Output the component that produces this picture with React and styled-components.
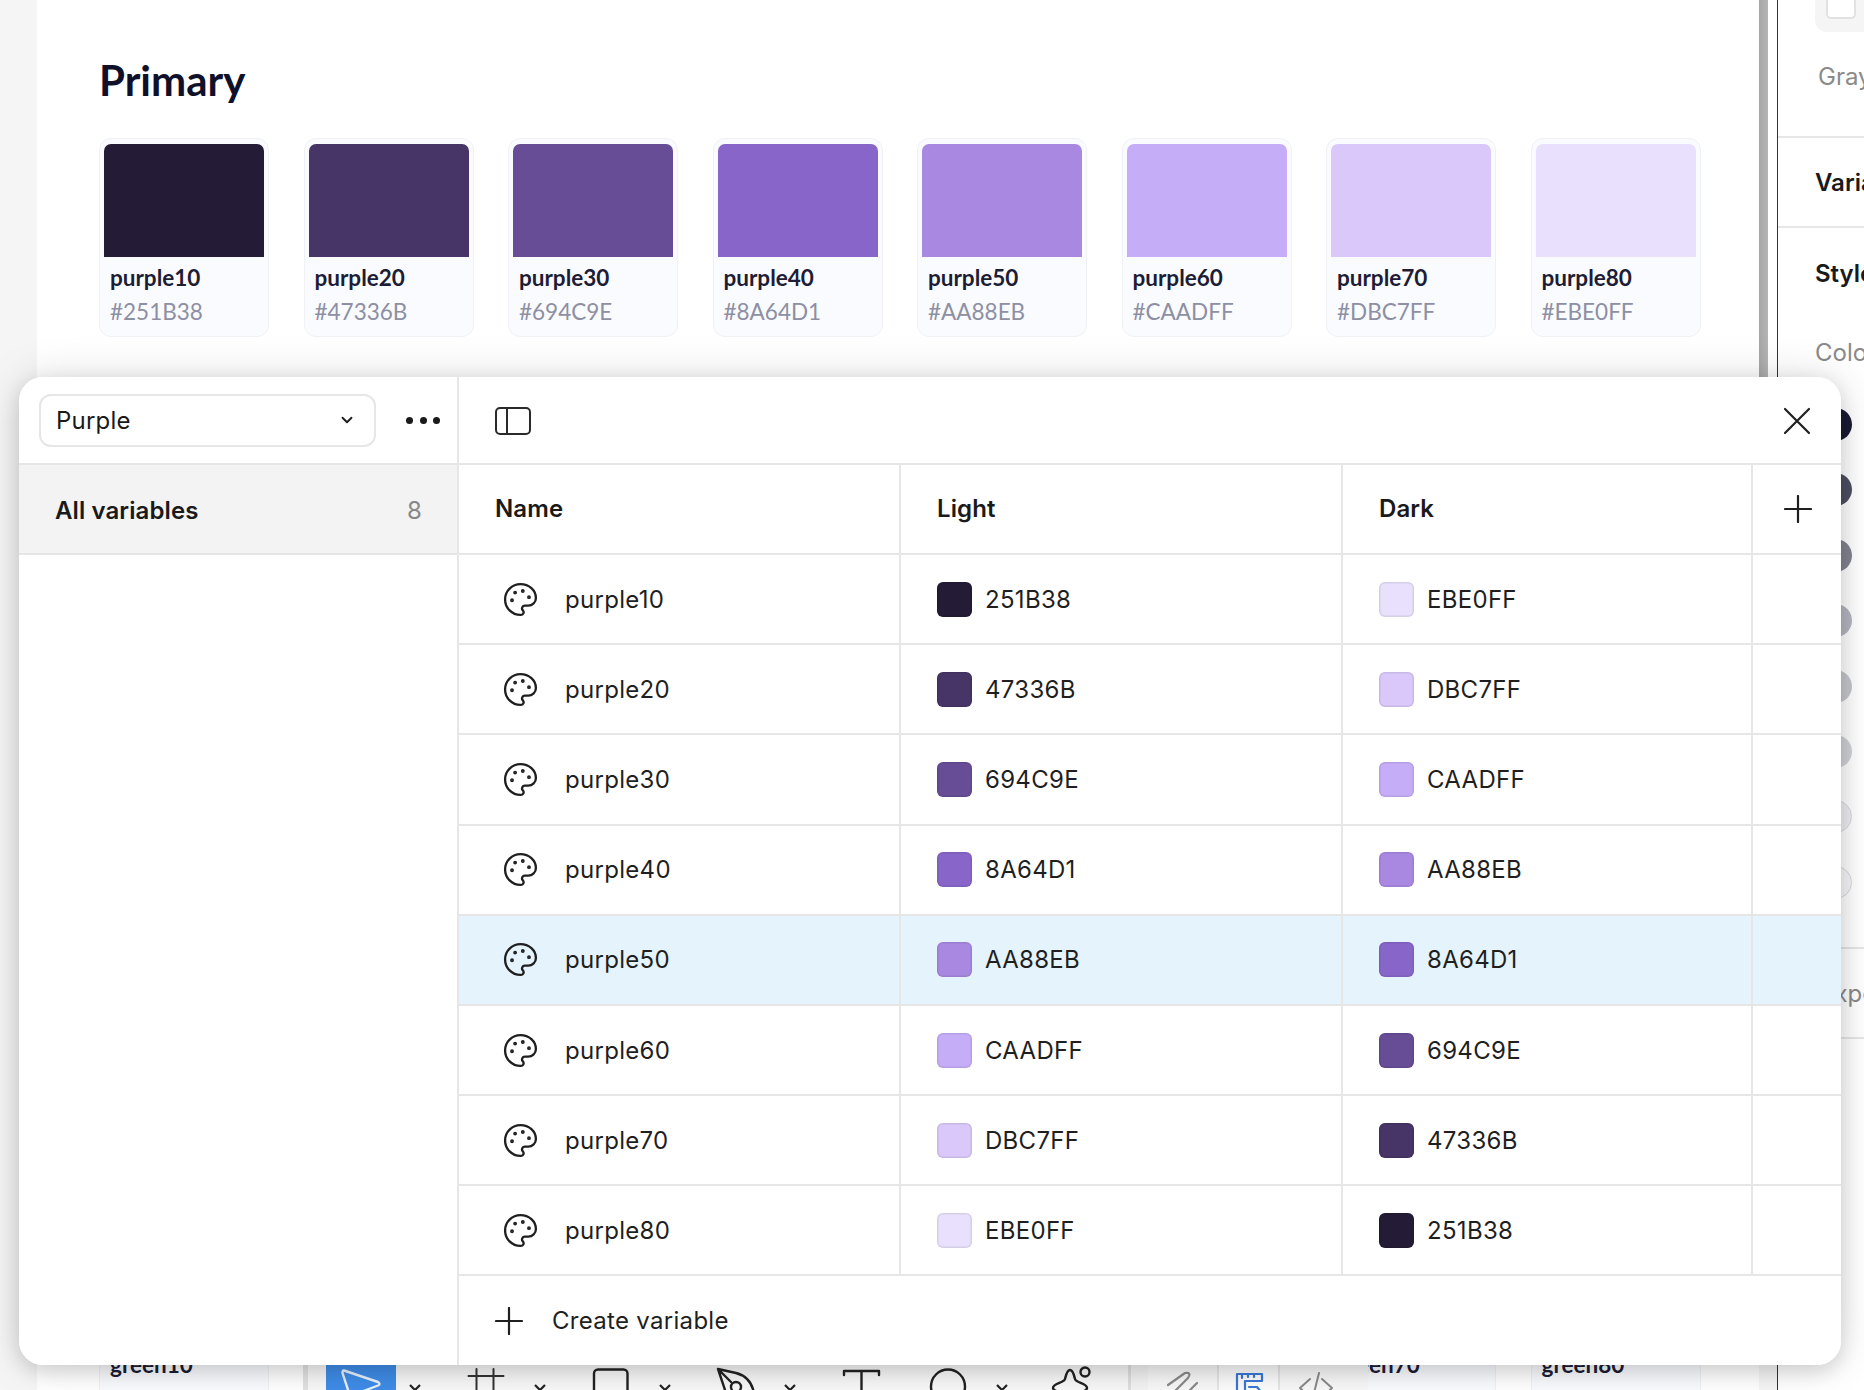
import React from 'react';
import styled, { createGlobalStyle } from 'styled-components';
import { Palette, ChevronDown } from 'lucide-react';

const GlobalStyle = createGlobalStyle`
  html, body {
    margin: 0;
    padding: 0;
    background: #fff;
  }
  * {
    box-sizing: border-box;
  }
`;

const purples = [
  { name: 'purple10', hex: '251B38', shown: '#241b36' },
  { name: 'purple20', hex: '47336B', shown: '#463566' },
  { name: 'purple30', hex: '694C9E', shown: '#664d96' },
  { name: 'purple40', hex: '8A64D1', shown: '#8866c9' },
  { name: 'purple50', hex: 'AA88EB', shown: '#a988e2' },
  { name: 'purple60', hex: 'CAADFF', shown: '#c5adf7' },
  { name: 'purple70', hex: 'DBC7FF', shown: '#d9c8f9' },
  { name: 'purple80', hex: 'EBE0FF', shown: '#e8e0fc' },
];

const greens = ['green10', 'green20', 'green30', 'green40', 'green50', 'green60', 'green70', 'green80'];

const styleDots = [
  { color: '#1a1b33' },
  { color: '#4d4e62' },
  { color: '#82838f' },
  { color: '#b4b5bf' },
  { color: '#c6c7cd' },
  { color: '#d0d1d6' },
  { color: '#eeeef2', outlined: true },
  { color: '#f7f7fa', outlined: true },
];

const Page = styled.div`
  position: relative;
  display: flex;
  width: 1864px;
  height: 1390px;
  overflow: hidden;
  font-family: Inter, sans-serif;
  background: #f5f5f5;
`;

const Gutter = styled.div`
  width: 37px;
  flex: none;
`;

const Canvas = styled.main`
  width: 1722px;
  flex: none;
  background: #fff;
  padding: 0 0 0 62px;
`;

const Heading = styled.h2`
  margin: 0;
  padding-top: 56px;
  height: 138px;
  font-family: Lato, sans-serif;
  font-size: 42px;
  line-height: 48px;
  font-weight: 700;
  color: #10102b;
`;

const CardRow = styled.div`
  display: flex;
  gap: 34.5px;
  margin-top: ${(p) => p.$top || 0}px;
`;

const Card = styled.div`
  width: 170px;
  height: 199px;
  flex: none;
  padding: 5px 4px 0;
  background: #fafbff;
  border: 1px solid #f0f1f5;
  border-radius: 12px;
`;

const Chip = styled.div`
  height: 113px;
  background: ${(p) => p.$color};
  border-radius: 7px 7px 0 0;
`;

const CardName = styled.div`
  margin: 7px 0 0 6px;
  font-family: Lato, sans-serif;
  font-size: 22.5px;
  line-height: 28px;
  font-weight: 700;
  color: #1d1d35;
`;

const CardHex = styled.div`
  margin: 6px 0 0 6px;
  font-family: Lato, sans-serif;
  font-size: 22.5px;
  line-height: 28px;
  color: #8d8fa3;
`;

const Scrollbar = styled.div`
  width: 9px;
  flex: none;
  height: 1340px;
  background: linear-gradient(90deg, #a6a6a6, #b4b4b4);
`;

const Spacer = styled.div`
  width: 9px;
  flex: none;
  height: 1340px;
  background: #fff;
`;

const Panel = styled.aside`
  flex: 1;
  border-left: 1.5px solid #333;
  background: #fff;
`;

const PanelTop = styled.div`
  height: 138px;
  padding: 0 0 0 37px;
  border-bottom: 2px solid #e6e6e6;
`;

const SwatchTray = styled.div`
  height: 32px;
  padding-left: 11px;
  background: #f5f5f5;
  border-radius: 0 0 0 12px;
`;

const SwatchBox = styled.div`
  width: 30px;
  height: 19px;
  background: #fff;
  border: 2px solid #e2e2e2;
  border-top: 0;
  border-radius: 0 0 5px 5px;
`;

const GrayLabel = styled.div`
  margin: ${(p) => p.$top}px 0 0 ${(p) => p.$left}px;
  font-size: 24px;
  line-height: 30px;
  color: #8a8a8a;
  white-space: nowrap;
`;

const PanelTitle = styled.div`
  height: 90px;
  padding-left: 37px;
  display: flex;
  align-items: center;
  border-bottom: ${(p) => (p.$flat ? '0' : '2px solid #e6e6e6')};
  font-size: 24px;
  font-weight: 600;
  color: #1a1a1a;
  white-space: nowrap;
`;

const DotList = styled.div`
  display: flex;
  flex-direction: column;
  gap: 32.4px;
  padding: 0 0 0 41px;
  margin-top: 40px;
`;

const StyleDot = styled.div`
  width: 33px;
  height: 33px;
  border-radius: 50%;
  background: ${(p) => p.$color};
  border: ${(p) => (p.$outlined ? '1px solid #d8d8de' : '0')};
`;

const ColorBlock = styled.div`
  display: flow-root;
  height: 631px;
  border-bottom: 2px solid #e6e6e6;
`;

const ExportRow = styled.div`
  height: 90px;
  padding-left: 42px;
  display: flex;
  align-items: center;
  font-size: 24px;
  color: #8a8a8a;
  white-space: nowrap;
  border-bottom: 2px solid #e6e6e6;
`;

const Toolbar = styled.div`
  position: absolute;
  left: 303px;
  top: 1352px;
  width: 1065px;
  height: 60px;
  display: flex;
  border-left: 5px solid #e2e2e2;
  background: #f3f3f3;
`;

const ToolGroup = styled.div`
  display: flex;
  gap: 17px;
  width: 823px;
  padding-left: 18px;
  background: #f8f8f8;
  border-right: 3px solid #dfdfdf;
  flex: none;
`;

const ToolSlot = styled.div`
  display: flex;
  flex: none;
`;

const Tool = styled.div`
  width: 70px;
  height: 60px;
  flex: none;
  padding-top: 13px;
  background: ${(p) => (p.$active ? '#3f8de8' : 'transparent')};
`;

const Caret = styled.div`
  width: 38px;
  flex: none;
  display: flex;
  justify-content: center;
  padding-top: 32px;
`;

const ModeGroup = styled.div`
  display: flex;
  margin-left: 17px;
  flex: none;
  background: #f8f8f8;
`;

const ModeTool = styled.div`
  width: ${(p) => p.$w}px;
  height: 60px;
  flex: none;
  padding-top: 13px;
  background: ${(p) => (p.$active ? '#fcfcfc' : 'transparent')};
  border-left: ${(p) => (p.$active ? '2px solid #e6e6e6' : '0')};
  border-right: ${(p) => (p.$active ? '2px solid #e6e6e6' : '0')};
`;

const ModalShadow = styled.div`
  position: absolute;
  left: 19px;
  top: 377px;
  width: 1822px;
  height: 988px;
  border-radius: 24px;
  box-shadow: 0 0 44px rgba(0, 0, 0, 0.13), 0 6px 20px rgba(0, 0, 0, 0.14);
`;

const Modal = styled.section`
  position: absolute;
  left: 19px;
  top: 377px;
  width: 1822px;
  height: 988px;
  display: flex;
  background: #fff;
  border-radius: 24px;
  overflow: hidden;
`;

const Sidebar = styled.div`
  width: 440px;
  flex: none;
  border-right: 2px solid #e6e6e6;
`;

const SidebarTop = styled.div`
  height: 88px;
  display: flex;
  align-items: center;
  padding: 0 16px 0 20px;
  border-bottom: 2px solid #e6e6e6;
`;

const Select = styled.div`
  width: 337px;
  height: 53px;
  flex: none;
  display: flex;
  align-items: center;
  justify-content: space-between;
  padding: 0 18px 0 15px;
  border: 2px solid #e6e6e6;
  border-radius: 12px;
  font-size: 24px;
  letter-spacing: 0.2px;
  color: #1a1a1a;
`;

const Dots = styled.div`
  margin-left: 30px;
  display: flex;
  gap: 6.5px;
`;

const Dot = styled.i`
  width: 7px;
  height: 7px;
  border-radius: 50%;
  background: #1a1a1a;
`;

const Collection = styled.div`
  height: 90px;
  display: flex;
  align-items: center;
  justify-content: space-between;
  padding: 2px 35px 0 36px;
  background: #f3f3f3;
  border-bottom: 2px solid #e6e6e6;
  font-size: 24px;
  font-weight: 600;
  letter-spacing: 0.1px;
  color: #1a1a1a;
`;

const Count = styled.span`
  font-weight: 400;
  color: #888;
`;

const Content = styled.div`
  flex: 1;
  display: flex;
  flex-direction: column;
`;

const ContentTop = styled.div`
  height: 88px;
  display: flex;
  align-items: center;
  justify-content: space-between;
  padding: 2px 30px 0 36px;
  border-bottom: 2px solid #e6e6e6;
`;

const TableRow = styled.div`
  display: grid;
  grid-template-columns: 442px 442px 410px 88px;
  height: 90.17px;
  flex: none;
  background: ${(p) => (p.$selected ? '#e5f3fd' : '#fff')};
  border-bottom: 2px solid #e6e6e6;
`;

const Cell = styled.div`
  display: flex;
  align-items: center;
  padding-left: 36px;
  border-right: 2px solid #e6e6e6;
  font-size: 24px;
  letter-spacing: 0.3px;
  color: #1f1f1f;

  &:last-child {
    border-right: 0;
    padding-left: 31px;
  }
`;

const HeadCell = styled(Cell)`
  padding-bottom: ${(p) => (p.$icon ? 0 : 2)}px;
  font-weight: 600;
  letter-spacing: 0.1px;
  color: #1a1a1a;
`;

const PaletteIcon = styled(Palette)`
  width: 37px;
  height: 37px;
  margin: 0 26px 0 7px;
  flex: none;
`;

const ColorChip = styled.span`
  width: 35px;
  height: 35px;
  margin-right: 13px;
  flex: none;
  border-radius: 6px;
  background: ${(p) => p.$color};
  box-shadow: inset 0 0 0 1.5px rgba(0, 0, 0, 0.08);
`;

const Footer = styled.div`
  flex: 1;
  display: flex;
  align-items: center;
  gap: 29px;
  padding: 0 0 0 36px;
  font-size: 24px;
  letter-spacing: 0.3px;
  color: #1f1f1f;
`;

const PanelIcon = () => (
  <svg width="36" height="28" viewBox="0 0 36 28" fill="none" stroke="#2a2a2a" strokeWidth="2">
    <rect x="1" y="1" width="34" height="26" rx="4" />
    <path d="M12 1v26" />
  </svg>
);

const CloseIcon = () => (
  <svg width="28" height="28" viewBox="0 0 28 28" fill="none" stroke="#1f1f1f" strokeWidth="2.2" strokeLinecap="round">
    <path d="M2 2l24 24M26 2L2 26" />
  </svg>
);

const PlusIcon = () => (
  <svg width="28" height="28" viewBox="0 0 28 28" fill="none" stroke="#1f1f1f" strokeWidth="2.2" strokeLinecap="round">
    <path d="M14 1v26M1 14h26" />
  </svg>
);

const ToolIcon = ({ children, stroke = '#222', width = 70, strokeWidth = 2.4 }) => (
  <svg
    width={width}
    height="47"
    viewBox={`0 0 ${width} 47`}
    fill="none"
    stroke={stroke}
    strokeWidth={strokeWidth}
    strokeLinecap="round"
    strokeLinejoin="round"
  >
    {children}
  </svg>
);

const CaretIcon = () => (
  <svg width="12" height="8" viewBox="0 0 12 8" fill="none" stroke="#222" strokeWidth="2.2">
    <path d="M1 1l5 5 5-5" />
  </svg>
);

const VariableRow = ({ item, mirror, selected }) => (
  <TableRow $selected={selected}>
    <Cell>
      <PaletteIcon strokeWidth={1.5} color="#1f1f1f" />
      {item.name}
    </Cell>
    <Cell>
      <ColorChip $color={item.shown} />
      {item.hex}
    </Cell>
    <Cell>
      <ColorChip $color={mirror.shown} />
      {mirror.hex}
    </Cell>
    <Cell />
  </TableRow>
);

const App = () => (
  <>
    <GlobalStyle />
    <Page>
      <Gutter />
      <Canvas>
        <Heading>Primary</Heading>
        <CardRow>
          {purples.map((p) => (
            <Card key={p.name}>
              <Chip $color={p.shown} />
              <CardName>{p.name}</CardName>
              <CardHex>#{p.hex}</CardHex>
            </Card>
          ))}
        </CardRow>
        <CardRow $top={888}>
          {greens.map((g) => (
            <Card key={g}>
              <Chip $color="#dfe4e0" />
              <CardName>{g}</CardName>
            </Card>
          ))}
        </CardRow>
      </Canvas>
      <Scrollbar />
      <Spacer />
      <Panel>
        <PanelTop>
          <SwatchTray>
            <SwatchBox />
          </SwatchTray>
          <GrayLabel $top={30} $left={3}>Gray</GrayLabel>
        </PanelTop>
        <PanelTitle>Variables</PanelTitle>
        <PanelTitle $flat>Styles</PanelTitle>
        <ColorBlock>
          <GrayLabel $top={20} $left={37}>Color</GrayLabel>
          <DotList>
            {styleDots.map((d) => (
              <StyleDot key={d.color} $color={d.color} $outlined={d.outlined} />
            ))}
          </DotList>
        </ColorBlock>
        <ExportRow>Export</ExportRow>
      </Panel>
      <Toolbar>
        <ToolGroup>
          <ToolSlot>
            <Tool $active>
              <ToolIcon stroke="#e8f1fc">
                <path d="M18 5.5L52 17q3 2 0 3.5L35 27l-7 9q-3 1-3-2L16.5 8q0-3 1.5-2.5z" />
              </ToolIcon>
            </Tool>
            <Caret><CaretIcon /></Caret>
          </ToolSlot>
          <ToolSlot>
            <Tool>
              <ToolIcon stroke="#333" strokeWidth={2}>
                <path d="M17.5 11h35M25.5 4v40M42.5 4v40" />
              </ToolIcon>
            </Tool>
            <Caret><CaretIcon /></Caret>
          </ToolSlot>
          <ToolSlot>
            <Tool>
              <ToolIcon>
                <rect x="18" y="4.5" width="33.5" height="40" rx="4" />
              </ToolIcon>
            </Tool>
            <Caret><CaretIcon /></Caret>
          </ToolSlot>
          <ToolSlot>
            <Tool>
              <ToolIcon>
                <path d="M17 4l18 4q15 4 18 20v16M17 4l8 24v16M17 4l13 13" />
                <circle cx="35" cy="22" r="5" />
              </ToolIcon>
            </Tool>
            <Caret><CaretIcon /></Caret>
          </ToolSlot>
          <ToolSlot>
            <Tool>
              <ToolIcon>
                <path d="M18 10V6h35v4M35.5 6v40" />
              </ToolIcon>
            </Tool>
          </ToolSlot>
          <ToolSlot>
            <Tool>
              <ToolIcon>
                <circle cx="35" cy="21.5" r="17" />
              </ToolIcon>
            </Tool>
            <Caret><CaretIcon /></Caret>
          </ToolSlot>
          <ToolSlot>
            <Tool>
              <ToolIcon>
                <path d="M32 5c-3 0-4 5-5 9s-12 4-12 9c0 3 6 4 10 5M32 5c3 0 4 5 5 9s12 4 12 9c0 3-5 4-9 5" />
                <circle cx="47" cy="7" r="4.5" />
              </ToolIcon>
            </Tool>
          </ToolSlot>
        </ToolGroup>
        <ModeGroup>
          <ModeTool $w={69}>
            <ToolIcon width={69} stroke="#8a8a8a" strokeWidth={2.2}>
              <path d="M20 20L37 8q7-1 3 5L27 26M42 25l7-7" />
            </ToolIcon>
          </ModeTool>
          <ModeTool $w={63} $active>
            <ToolIcon width={59} stroke="#3a78d6" strokeWidth={2.2}>
              <path d="M18 30V9h25v7H26v14M23 9v4M29 9v3M35 9v3M30 22h8l4 5" />
            </ToolIcon>
          </ModeTool>
          <ModeTool $w={88}>
            <ToolIcon width={88} stroke="#8a8a8a" strokeWidth={2}>
              <path d="M30 14l-10 9 10 9M33 32L39 8M42 14l10 9-10 9" />
            </ToolIcon>
          </ModeTool>
        </ModeGroup>
      </Toolbar>
      <ModalShadow />
      <Modal>
        <Sidebar>
          <SidebarTop>
            <Select>
              Purple
              <ChevronDown size={18} strokeWidth={2.4} />
            </Select>
            <Dots>
              <Dot />
              <Dot />
              <Dot />
            </Dots>
          </SidebarTop>
          <Collection>
            All variables
            <Count>8</Count>
          </Collection>
        </Sidebar>
        <Content>
          <ContentTop>
            <PanelIcon />
            <CloseIcon />
          </ContentTop>
          <TableRow>
            <HeadCell>Name</HeadCell>
            <HeadCell>Light</HeadCell>
            <HeadCell>Dark</HeadCell>
            <HeadCell $icon>
              <PlusIcon />
            </HeadCell>
          </TableRow>
          {purples.map((p, i) => (
            <VariableRow key={p.name} item={p} mirror={purples[7 - i]} selected={i === 4} />
          ))}
          <Footer>
            <PlusIcon />
            Create variable
          </Footer>
        </Content>
      </Modal>
    </Page>
  </>
);

export default App;
